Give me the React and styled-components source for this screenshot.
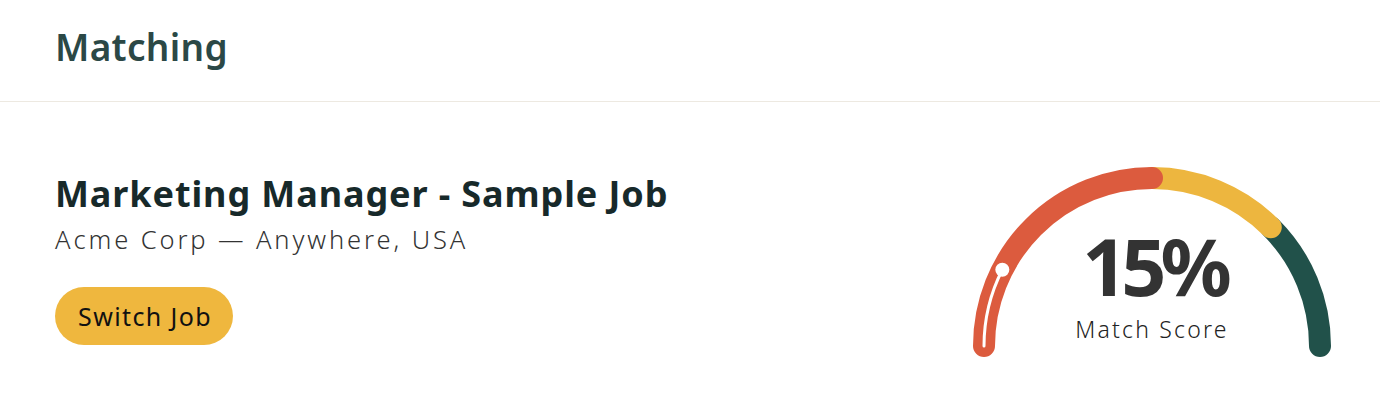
import styled, { createGlobalStyle } from "styled-components";

const GlobalStyle = createGlobalStyle`
  html, body {
    margin: 0;
    padding: 0;
    background: #ffffff;
    font-family: "Noto Sans", "Open Sans", sans-serif;
  }
`;

const CX = 190;
const CY = 180;
const R = 168;

function point(deg) {
  const rad = (deg * Math.PI) / 180;
  return [CX + R * Math.cos(rad), CY - R * Math.sin(rad)];
}

function arc(from, to) {
  const [x1, y1] = point(from);
  const [x2, y2] = point(to);
  return `M ${x1} ${y1} A ${R} ${R} 0 0 1 ${x2} ${y2}`;
}

export default function App() {
  const score = 15;
  const angle = 180 - (score / 100) * 180;
  const [dx, dy] = point(angle);

  return (
    <>
      <GlobalStyle />
      <Page>
        <Header>
          <Title>Matching</Title>
        </Header>
        <Body>
          <JobInfo>
            <JobTitle>Marketing Manager - Sample Job</JobTitle>
            <JobMeta>Acme Corp — Anywhere, USA</JobMeta>
            <SwitchButton>Switch Job</SwitchButton>
          </JobInfo>
          <Gauge>
            <svg width="380" height="200" viewBox="0 0 380 200">
              <path d={arc(45, 0)} stroke="#21514a" strokeWidth="22" fill="none" strokeLinecap="round" />
              <path d={arc(90, 45)} stroke="#edb63f" strokeWidth="22" fill="none" strokeLinecap="round" />
              <path d={arc(180, 90)} stroke="#dc5b3e" strokeWidth="22" fill="none" strokeLinecap="round" />
              <path d={arc(180, angle)} stroke="#ffffff" strokeWidth="3" fill="none" strokeLinecap="round" />
              <circle cx={dx} cy={dy} r="7" fill="#ffffff" />
            </svg>
            <Reading>
              <Score>{score}%</Score>
              <ScoreLabel>Match Score</ScoreLabel>
            </Reading>
          </Gauge>
        </Body>
      </Page>
    </>
  );
}

const Page = styled.div`
  width: 1380px;
  height: 410px;
  background: #ffffff;
`;

const Header = styled.div`
  height: 102px;
  box-sizing: border-box;
  padding: 25px 55px 0;
  border-bottom: 1px solid #ede9e1;
`;

const Title = styled.h1`
  margin: 0;
  font-size: 37px;
  line-height: 44px;
  font-weight: 600;
  color: #2b4846;
  letter-spacing: 0.3px;
`;

const Body = styled.div`
  display: flex;
  justify-content: space-between;
  align-items: flex-start;
  padding: 64px 38px 0 55px;
`;

const JobInfo = styled.div`
  display: flex;
  flex-direction: column;
  align-items: flex-start;
  padding-top: 6px;
`;

const JobTitle = styled.h2`
  margin: 0;
  font-size: 36px;
  font-weight: 700;
  color: #17292a;
  line-height: 44px;
  letter-spacing: 0.9px;
`;

const JobMeta = styled.div`
  margin-top: 6px;
  font-size: 25.5px;
  font-weight: 300;
  color: #333333;
  line-height: 34px;
  letter-spacing: 2.9px;
`;

const SwitchButton = styled.button`
  margin-top: 31px;
  height: 58px;
  padding: 0 21px 0 23px;
  border: none;
  border-radius: 29px;
  background: #efb73e;
  color: #111111;
  font-family: inherit;
  font-size: 25px;
  font-weight: 400;
  letter-spacing: 1.4px;
  cursor: pointer;
`;

const Gauge = styled.div`
  position: relative;
  width: 380px;
  height: 200px;
  svg {
    display: block;
  }
`;

const Reading = styled.div`
  position: absolute;
  left: 0;
  right: 0;
  top: 60px;
  display: flex;
  flex-direction: column;
  align-items: center;
`;

const Score = styled.div`
  font-size: 79px;
  font-weight: 700;
  color: #333333;
  line-height: 80px;
  letter-spacing: -6px;
  padding-left: 4px;
`;

const ScoreLabel = styled.div`
  margin-top: 9px;
  font-size: 23px;
  font-weight: 300;
  color: #222222;
  line-height: 28px;
  letter-spacing: 2.2px;
`;
